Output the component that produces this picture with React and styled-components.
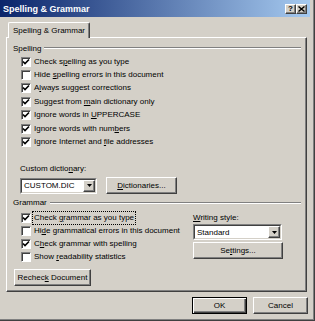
import React from 'react';
import styled, { createGlobalStyle, css } from 'styled-components';

const GlobalStyle = createGlobalStyle`
  html, body {
    margin: 0;
    padding: 0;
    background: #d4d0c8;
  }
  body {
    font-family: 'Liberation Sans', Arial, sans-serif;
    font-size: 8px;
    color: #000;
  }
  * {
    box-sizing: border-box;
  }
`;

const raised = css`
  border-top: 1px solid #fff;
  border-left: 1px solid #fff;
  border-right: 1px solid #404040;
  border-bottom: 1px solid #404040;
  box-shadow: inset -1px -1px 0 #808080;
`;

const sunkenOuter = css`
  border-top: 1px solid #808080;
  border-left: 1px solid #808080;
  border-right: 1px solid #fff;
  border-bottom: 1px solid #fff;
`;

const Window = styled.div`
  width: 315px;
  height: 321px;
  display: flex;
  flex-direction: column;
  background: #d4d0c8;
  padding: 0 4px 3px 0;
  border-right: 1px solid #404040;
  border-bottom: 1px solid #404040;
  box-shadow: inset -1px -1px 0 #808080;
`;

const TitleBar = styled.div`
  height: 17px;
  display: flex;
  align-items: center;
  justify-content: space-between;
  padding: 0 3px 0 3px;
  background: linear-gradient(to right, #0a246a, #a6caf0);
`;

const Title = styled.div`
  color: #fff;
  font-weight: bold;
  font-size: 9px;
`;

const CaptionButtons = styled.div`
  display: flex;
  gap: 0;
`;

const CaptionButton = styled.div`
  width: 11px;
  height: 10px;
  display: flex;
  align-items: center;
  justify-content: center;
  background: #d4d0c8;
  font-weight: bold;
  font-size: 8px;
  line-height: 1;
  ${raised}
`;

const Body = styled.div`
  flex: 1;
  display: flex;
  flex-direction: column;
  padding: 5px 0 0 6px;
`;

const TabStrip = styled.div`
  display: flex;
  padding-left: 2px;
`;

const Tab = styled.div`
  position: relative;
  z-index: 1;
  width: 82px;
  height: 16px;
  margin-bottom: -1px;
  padding: 0 0 0 4px;
  display: flex;
  align-items: center;
  background: #d4d0c8;
  border-top: 1px solid #fff;
  border-left: 1px solid #fff;
  border-right: 1px solid #404040;
  border-radius: 2px 2px 0 0;
  box-shadow: inset -1px 0 0 #808080;
`;

const Panel = styled.div`
  width: 301px;
  height: 255px;
  display: flex;
  flex-direction: column;
  padding: 5px 5px 0 6px;
  ${raised}
`;

const GroupHeader = styled.div`
  height: 10px;
  display: flex;
  align-items: center;
  gap: 3px;
  margin-top: ${(p) => p.$top || 0}px;
`;

const Rule = styled.div`
  flex: 1;
  border-top: 1px solid #808080;
  border-bottom: 1px solid #fff;
`;

const CheckList = styled.div`
  display: flex;
  flex-direction: column;
  padding-left: 8px;
  margin-top: ${(p) => p.$top || 0}px;
  width: ${(p) => (p.$width ? `${p.$width}px` : 'auto')};
`;

const CheckRow = styled.div`
  height: ${(p) => p.$height}px;
  display: flex;
  align-items: center;
  gap: 2px;
  white-space: nowrap;
`;

const Box = styled.div`
  width: 10px;
  height: 10px;
  flex: none;
  background: #fff;
  ${sunkenOuter}
  box-shadow: inset 1px 1px 0 #404040;
  display: flex;
  align-items: center;
  justify-content: center;
`;

const CheckLabel = styled.span`
  padding: 1px 1px;
  line-height: 10px;
  outline: ${(p) => (p.$focused ? '1px dotted #000' : 'none')};
`;

const Key = styled.span`
  text-decoration: underline;
`;

const DictRow = styled.div`
  display: flex;
  align-items: flex-end;
  gap: 9px;
  margin-top: 15px;
  padding-left: 7px;
`;

const Field = styled.div`
  display: flex;
  flex-direction: column;
  gap: ${(p) => p.$gap || 0}px;
`;

const FieldLabel = styled.div`
  line-height: ${(p) => p.$height || 10}px;
  white-space: nowrap;
`;

const Combo = styled.div`
  width: ${(p) => p.$width}px;
  height: 16px;
  ${sunkenOuter}
`;

const ComboInner = styled.div`
  height: 100%;
  display: flex;
  align-items: stretch;
  background: #fff;
  border-top: 1px solid #404040;
  border-left: 1px solid #404040;
  border-right: 1px solid #d4d0c8;
  border-bottom: 1px solid #d4d0c8;
`;

const ComboValue = styled.div`
  flex: 1;
  display: flex;
  align-items: center;
  padding-left: 2px;
  white-space: nowrap;
`;

const ArrowButton = styled.div`
  width: 12px;
  background: #d4d0c8;
  display: flex;
  align-items: center;
  justify-content: center;
  ${raised}
`;

const Button = styled.div`
  width: ${(p) => p.$width}px;
  height: 17px;
  margin-top: ${(p) => p.$top || 0}px;
  margin-left: ${(p) => p.$left || 0}px;
  display: flex;
  align-items: center;
  justify-content: center;
  background: #d4d0c8;
  white-space: nowrap;
  ${(p) =>
    p.$default
      ? css`
          border: 1px solid #000;
          box-shadow: inset 1px 1px 0 #fff, inset -1px -1px 0 #404040,
            inset -2px -2px 0 #808080;
        `
      : raised}
`;

const ButtonText = styled.span`
  white-space: pre;
`;

const GrammarRow = styled.div`
  display: flex;
  margin-top: 3.5px;
`;

const StyleColumn = styled.div`
  width: 90px;
  display: flex;
  flex-direction: column;
`;

const Footer = styled.div`
  display: flex;
  justify-content: flex-end;
  gap: 6px;
  margin-top: 5px;
  padding-right: 2px;
`;

const Mnemonic = ({ text }) => {
  const i = text.indexOf('~');
  if (i < 0) return text;
  return (
    <>
      {text.slice(0, i)}
      <Key>{text[i + 1]}</Key>
      {text.slice(i + 2)}
    </>
  );
};

const CheckMark = () => (
  <svg width="8" height="8" viewBox="0 0 8 8">
    <polyline points="1,3.5 3,5.5 7,1.5" fill="none" stroke="#000" strokeWidth="1.6" />
  </svg>
);

const Arrow = () => (
  <svg width="5" height="3" viewBox="0 0 5 3">
    <polygon points="0,0 5,0 2.5,3" fill="#000" />
  </svg>
);

const CheckBox = ({ label, checked, focused, height }) => (
  <CheckRow $height={height}>
    <Box>{checked && <CheckMark />}</Box>
    <CheckLabel $focused={focused}>
      <Mnemonic text={label} />
    </CheckLabel>
  </CheckRow>
);

const ComboBox = ({ value, width }) => (
  <Combo $width={width}>
    <ComboInner>
      <ComboValue>{value}</ComboValue>
      <ArrowButton>
        <Arrow />
      </ArrowButton>
    </ComboInner>
  </Combo>
);

const PushButton = ({ text, ...props }) => (
  <Button {...props}>
    <ButtonText>
      <Mnemonic text={text} />
    </ButtonText>
  </Button>
);

const spelling = [
  { label: 'Check s~pelling as you type', checked: true },
  { label: 'Hide ~spelling errors in this document', checked: false },
  { label: 'A~lways suggest corrections', checked: true },
  { label: 'Suggest from ~main dictionary only', checked: true },
  { label: 'Ignore words in ~UPPERCASE', checked: true },
  { label: 'Ignore words with num~bers', checked: true },
  { label: 'Ignore Internet and ~file addresses', checked: true },
];

const grammar = [
  { label: 'Check ~grammar as you type', checked: true, focused: true },
  { label: 'Hi~de grammatical errors in this document', checked: false },
  { label: 'C~heck grammar with spelling', checked: true },
  { label: 'Show ~readability statistics', checked: false },
];

const App = () => {
  return (
    <>
      <GlobalStyle />
      <Window>
        <TitleBar>
          <Title>Spelling &amp; Grammar</Title>
          <CaptionButtons>
            <CaptionButton>?</CaptionButton>
            <CaptionButton>
              <svg width="7" height="6" viewBox="0 0 7 6">
                <path d="M0.5 0.5 L6.5 5.5 M6.5 0.5 L0.5 5.5" stroke="#000" strokeWidth="1.4" />
              </svg>
            </CaptionButton>
          </CaptionButtons>
        </TitleBar>
        <Body>
          <TabStrip>
            <Tab>Spelling &amp; Grammar</Tab>
          </TabStrip>
          <Panel>
            <GroupHeader>
              Spelling
              <Rule />
            </GroupHeader>
            <CheckList $top={2}>
              {spelling.map((item) => (
                <CheckBox key={item.label} height={13.4} {...item} />
              ))}
            </CheckList>
            <DictRow>
              <Field $gap={4}>
                <FieldLabel>
                  <Mnemonic text="Custom dictio~nary:" />
                </FieldLabel>
                <ComboBox value="CUSTOM.DIC" width={77} />
              </Field>
              <PushButton $width={71} text="~Dictionaries..." />
            </DictRow>
            <GroupHeader $top={4}>
              Grammar
              <Rule />
            </GroupHeader>
            <GrammarRow>
              <CheckList $width={180}>
                {grammar.map((item) => (
                  <CheckBox key={item.label} height={13} {...item} />
                ))}
              </CheckList>
              <StyleColumn>
                <FieldLabel $height={13}>
                  <Mnemonic text="~Writing style:" />
                </FieldLabel>
                <ComboBox value="Standard" width={89} />
                <PushButton $width={90} $top={2} text="Se~ttings..." />
              </StyleColumn>
            </GrammarRow>
            <PushButton $width={77} $top={6} $left={1} text="Rechec~k Document" />
          </Panel>
          <Footer>
            <PushButton $width={55} $default text="OK" />
            <PushButton $width={55} text="Cancel" />
          </Footer>
        </Body>
      </Window>
    </>
  );
};

export default App;
